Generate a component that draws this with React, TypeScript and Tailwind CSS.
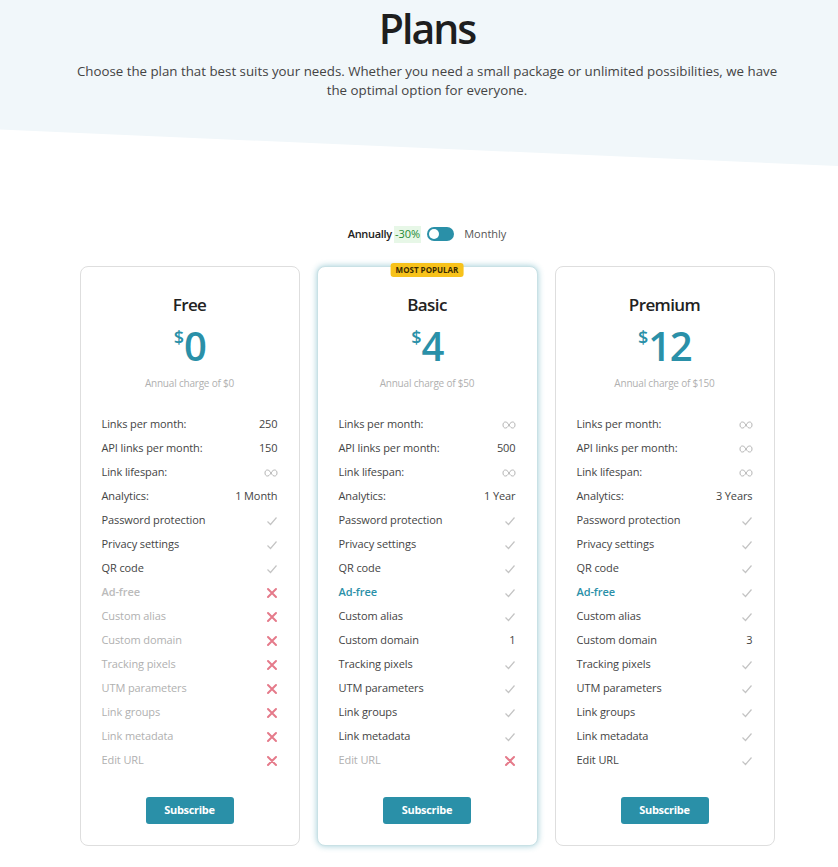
import React from "react";

type Val = string | boolean;

const features = [
  "Links per month:",
  "API links per month:",
  "Link lifespan:",
  "Analytics:",
  "Password protection",
  "Privacy settings",
  "QR code",
  "Ad-free",
  "Custom alias",
  "Custom domain",
  "Tracking pixels",
  "UTM parameters",
  "Link groups",
  "Link metadata",
  "Edit URL",
];

const plans: { name: string; price: string; annual: string; popular?: boolean; values: Val[] }[] = [
  {
    name: "Free",
    price: "0",
    annual: "Annual charge of $0",
    values: ["250", "150", "∞", "1 Month", true, true, true, false, false, false, false, false, false, false, false],
  },
  {
    name: "Basic",
    price: "4",
    annual: "Annual charge of $50",
    popular: true,
    values: ["∞", "500", "∞", "1 Year", true, true, true, true, true, "1", true, true, true, true, false],
  },
  {
    name: "Premium",
    price: "12",
    annual: "Annual charge of $150",
    values: ["∞", "∞", "∞", "3 Years", true, true, true, true, true, "3", true, true, true, true, true],
  },
];

const Check = () => (
  <svg width="12" height="12" viewBox="0 0 12 12" fill="none">
    <path d="M1.5 6.5 L4.5 9.5 L10.5 2.5" stroke="#c4c4c4" strokeWidth="1.2" />
  </svg>
);

const Cross = () => (
  <svg width="12" height="12" viewBox="0 0 12 12" fill="none">
    <path d="M2 2 L10 10 M10 2 L2 10" stroke="#e57a8a" strokeWidth="2" strokeLinecap="round" />
  </svg>
);

const Infinity = () => (
  <svg width="14" height="8" viewBox="0 0 14 8" fill="none">
    <path
      d="M7 4 C5.5 1.5 4.5 1 3.3 1 C1.9 1 1 2.3 1 4 C1 5.7 1.9 7 3.3 7 C4.5 7 5.5 6.5 7 4 C8.5 1.5 9.5 1 10.7 1 C12.1 1 13 2.3 13 4 C13 5.7 12.1 7 10.7 7 C9.5 7 8.5 6.5 7 4 Z"
      stroke="#b5b5b5"
      strokeWidth="1"
    />
  </svg>
);

const Card = ({ plan }: { plan: (typeof plans)[number] }) => {
  return (
    <div
      className={
        plan.popular
          ? "relative w-[221px] rounded-lg border border-[#c9e1e5] bg-white shadow-[0_0_6px_rgba(42,143,166,0.45)] px-[21px] pt-[26px] pb-[21px]"
          : "relative w-[220px] rounded-lg border border-[#dedede] bg-white px-[21px] pt-[26px] pb-[21px]"
      }
    >
      {plan.popular && (
        <div className="absolute left-1/2 top-[-4px] -translate-x-1/2 rounded-[3px] bg-[#f7c21b] px-[5px] h-[14px] flex items-center text-[8px] font-bold text-[#3a2a00] leading-none whitespace-nowrap">
          MOST POPULAR
        </div>
      )}
      <div className="text-center text-[17px] text-[#222] font-semibold leading-[24px] tracking-[-0.6px]">{plan.name}</div>
      <div className="mt-[9px] flex justify-center text-[#2a90a8]">
        <span className="text-[18px] font-semibold leading-none mt-[2px]">$</span>
        <span className="text-[40px] font-semibold leading-[40px] tracking-[-1.5px]">{plan.price}</span>
      </div>
      <div className="mt-[10px] text-center text-[10px] text-[#b0b0b0] leading-[14px] tracking-[-0.2px]">{plan.annual}</div>
      <div className="mt-[23px] flex flex-col">
        {features.map((f, i) => {
          const v = plan.values[i];
          const disabled = v === false;
          const isAd = f === "Ad-free";
          let labelClass = "text-[#444]";
          if (isAd) labelClass = disabled ? "text-[#bbb] font-semibold" : "text-[#2a90a8] font-semibold";
          else if (disabled) labelClass = "text-[#b0b0b0]";
          return (
            <div key={f} className="flex h-[24px] items-center justify-between text-[11px] tracking-[-0.1px]">
              <span className={labelClass}>{f}</span>
              <span className="flex items-center text-[#444]">
                {v === true ? <Check /> : v === false ? <Cross /> : v === "∞" ? <Infinity /> : v}
              </span>
            </div>
          );
        })}
      </div>
      <div className="mt-[24px] flex justify-center">
        <button className="h-[27px] w-[88px] rounded-[3px] bg-[#2a90a8] text-[11px] font-bold text-white tracking-[-0.3px]">
          Subscribe
        </button>
      </div>
    </div>
  );
};

export default function App() {
  return (
    <div className="relative min-h-[867px] bg-white pl-4 font-['Open_Sans',sans-serif] overflow-hidden">
      <div className="absolute inset-x-0 top-0 h-[166px] bg-[#f1f7fa] [clip-path:polygon(0_0,100%_0,100%_100%,0_78%)]" />
      <div className="relative">
        <div className="flex flex-col items-center pt-[2px]">
          <h1 className="text-[41px] font-semibold text-[#1e1e1e] leading-[52px] tracking-[-2px]">Plans</h1>
          <p className="mt-[8px] w-[716px] text-center text-[13.3px] leading-[19px] text-[#444]">
            Choose the plan that best suits your needs. Whether you need a small package or unlimited possibilities, we
            have the optimal option for everyone.
          </p>
        </div>
        <div className="mt-[126px] flex items-center justify-center text-[11px]">
          <span className="font-semibold text-[#222] tracking-[-0.3px]">Annually</span>
          <span className="ml-[2px] bg-[#e7f7e7] px-[1px] text-[#1f8a35]">-30%</span>
          <div className="ml-[6px] flex h-[14px] w-[27px] items-center rounded-full bg-[#2a90a8] px-[2px]">
            <div className="h-[10px] w-[10px] rounded-full bg-white" />
          </div>
          <span className="ml-[10px] text-[#555]">Monthly</span>
        </div>
        <div className="mt-[23px] flex items-start justify-center gap-[17px]">
          {plans.map((p) => (
            <Card key={p.name} plan={p} />
          ))}
        </div>
      </div>
    </div>
  );
}
